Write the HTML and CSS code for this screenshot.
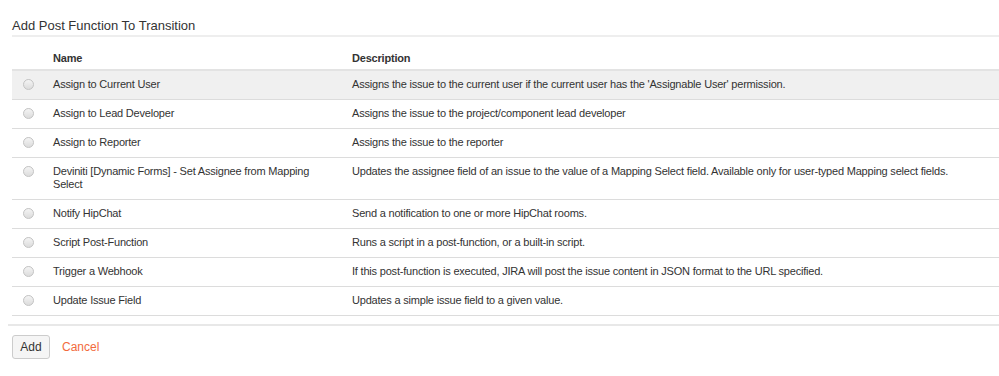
FILE: index.html
```html
<!DOCTYPE html>
<html>
<head>
<meta charset="utf-8">
<link rel="stylesheet" href="styles.css">
</head>
<body>
<div class="page">
  <h2 class="title">Add Post Function To Transition</h2>
  <table class="funcs">
    <thead>
      <tr><th class="sel"></th><th class="name">Name</th><th class="desc">Description</th></tr>
    </thead>
    <tbody>
      <tr class="active"><td class="sel"><span class="radio"></span></td><td class="name">Assign to Current User</td><td class="desc">Assigns the issue to the current user if the current user has the 'Assignable User' permission.</td></tr>
      <tr><td class="sel"><span class="radio"></span></td><td class="name">Assign to Lead Developer</td><td class="desc">Assigns the issue to the project/component lead developer</td></tr>
      <tr><td class="sel"><span class="radio"></span></td><td class="name">Assign to Reporter</td><td class="desc">Assigns the issue to the reporter</td></tr>
      <tr><td class="sel"><span class="radio"></span></td><td class="name">Deviniti [Dynamic Forms] - Set Assignee from Mapping Select</td><td class="desc">Updates the assignee field of an issue to the value of a Mapping Select field. Available only for user-typed Mapping select fields.</td></tr>
      <tr><td class="sel"><span class="radio"></span></td><td class="name">Notify HipChat</td><td class="desc">Send a notification to one or more HipChat rooms.</td></tr>
      <tr><td class="sel"><span class="radio"></span></td><td class="name">Script Post-Function</td><td class="desc">Runs a script in a post-function, or a built-in script.</td></tr>
      <tr><td class="sel"><span class="radio"></span></td><td class="name">Trigger a Webhook</td><td class="desc">If this post-function is executed, JIRA will post the issue content in JSON format to the URL specified.</td></tr>
      <tr><td class="sel"><span class="radio"></span></td><td class="name">Update Issue Field</td><td class="desc">Updates a simple issue field to a given value.</td></tr>
    </tbody>
  </table>
  <div class="footer">
    <button class="btn">Add</button>
    <a class="cancel" href="#">Cancel</a>
  </div>
</div>
</body>
</html>
```

FILE: styles.css
```css
html, body {
  margin: 0;
  padding: 0;
  background: #fff;
}
body {
  font-family: "Liberation Sans", Arial, sans-serif;
  font-size: 11px;
  letter-spacing: -0.2px;
  color: #333;
}
.page {
  padding: 0 0 0 8px;
}
.title {
  margin: 0 0 0 4px;
  padding: 18px 0 1px;
  font-size: 13px;
  line-height: 16px;
  letter-spacing: 0;
  font-weight: normal;
  color: #333;
  border-bottom: 2px solid #eee;
}
.funcs {
  margin-left: 4px;
  width: calc(100% - 4px);
  border-collapse: collapse;
}
.funcs th,
.funcs td {
  text-align: left;
  vertical-align: top;
  line-height: 13px;
  padding: 7px 0 8px;
}
.funcs th {
  font-weight: bold;
  padding: 15px 0 4px;
  border-bottom: 2px solid #e3e3e3;
}
.funcs td {
  border-bottom: 1px solid #dcdcdc;
}
.funcs tr.active td {
  background: #f0f0f0;
}
.funcs .sel {
  width: 41px;
  padding-left: 0;
}
.funcs .name {
  width: 265px;
  padding-right: 34px;
}
.radio {
  display: block;
  box-sizing: border-box;
  width: 11px;
  height: 11px;
  margin: 1px 0 0 11px;
  border-radius: 50%;
  border: 1px solid #c4c4c4;
  background: linear-gradient(#f4f4f4, #dcdcdc);
}
.footer {
  margin-top: 8px;
  border-top: 2px solid #e8e8e8;
  padding: 9px 0 0 4px;
  display: flex;
  align-items: center;
  gap: 12px;
}
.btn {
  font-family: "Liberation Sans", Arial, sans-serif;
  font-size: 12px;
  color: #333;
  height: 24px;
  width: 38px;
  padding: 0;
  background: #f5f5f5;
  border: 1px solid #ccc;
  border-radius: 3px;
}
.cancel {
  color: #f26b3c;
  font-size: 12px;
  letter-spacing: 0;
  text-decoration: none;
}
```
